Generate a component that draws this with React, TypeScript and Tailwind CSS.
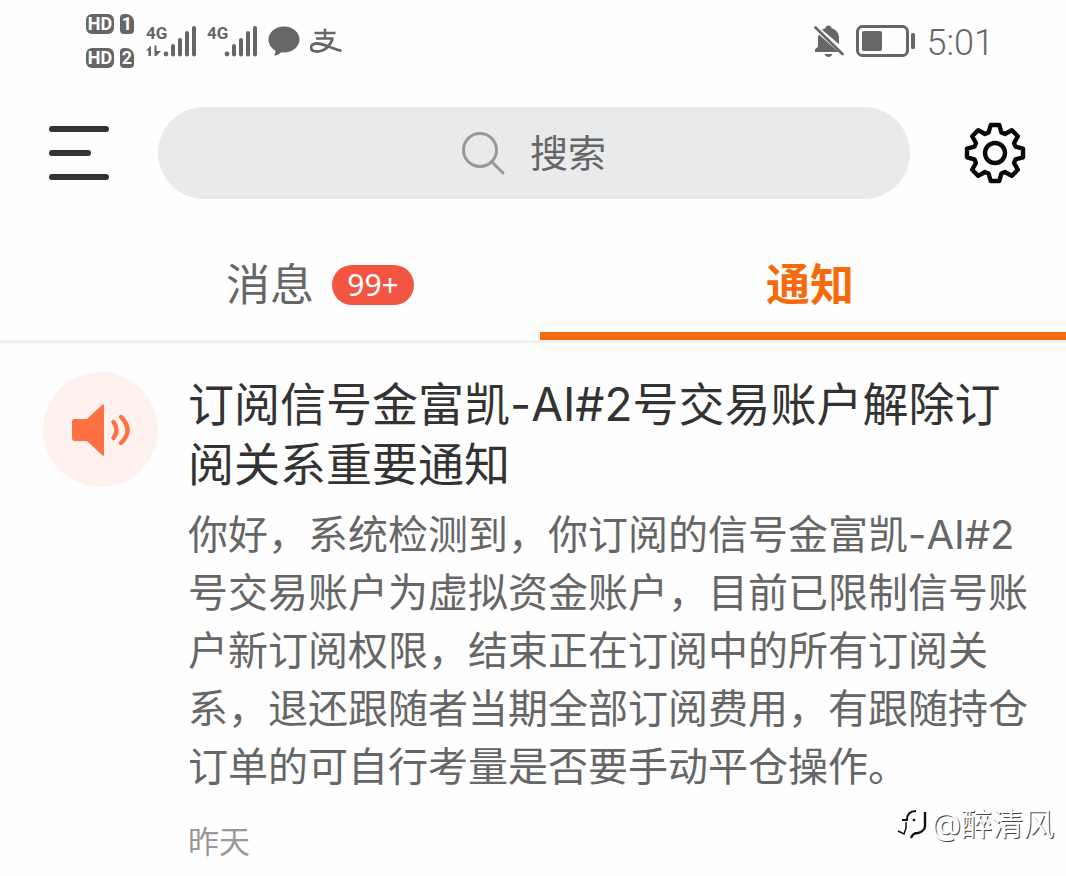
import type { ReactNode } from 'react'

function SimRow({ slot }: { slot: string }) {
  return (
    <div className="flex h-5 items-stretch gap-1.5 font-['Roboto'] text-lg leading-5 font-bold text-white">
      <span className="w-7 rounded-md bg-[#666] text-center">HD</span>
      <span className="w-3.5 rounded-sm rounded-tr-lg bg-[#666] text-center">{slot}</span>
    </div>
  )
}

function Signal({ arrows = false }: { arrows?: boolean }) {
  return (
    <svg width="51" height="46" viewBox="0 -6 51 46" fill="#666" aria-hidden="true">
      <text x="0" y="15" fontFamily="Roboto" fontWeight="700" fontSize="17">4G</text>
      {arrows && <path d="M0 26.500 5 21.500V32H2.500V26.500ZM8.500 21.500H10.500V27h4.500L10.500 32H8.500Z" />}
      <circle cx="20" cy="30" r="2.400" />
      <rect x="25" y="20" width="4" height="12.500" rx="2" />
      <rect x="32" y="14" width="4" height="18.500" rx="2" />
      <rect x="39" y="7" width="4" height="25.500" rx="2" />
      <rect x="46" y="2" width="4" height="30.500" rx="2" />
    </svg>
  )
}

function StatusBar() {
  return (
    <div className="flex h-[81px] items-center justify-between pr-[86px] pl-[86px]">
      <div className="flex items-center">
        <div className="flex flex-col gap-3.5">
          <SimRow slot="1" />
          <SimRow slot="2" />
        </div>
        <div className="ml-3 flex items-center gap-2.5">
          <Signal arrows />
          <Signal />
          <svg width="32" height="32" viewBox="0 0 32 32" fill="#666" aria-hidden="true">
            <path d="M16 1.500C24.600 1.500 31.500 7.200 31.500 14.500S24.600 27.500 16 27.500c-.9 0-1.800 0-2.600-.2-2 1.900-4.600 3.100-7.400 3.200 1.200-1.500 1.600-3.200 1.200-5C3 23 .5 19 .5 14.500.5 7.200 7.400 1.500 16 1.500Z" />
          </svg>
          <svg width="32" height="26" viewBox="0 0 32 26" fill="none" stroke="#666" aria-hidden="true">
            <path d="M4.500 5h21M15 .5v10M6 10.500h17.500" strokeWidth="2.400" />
            <path d="M22.500 11C20.500 17 15 23.500 7 23.500c-4 0-6-1.500-6-3.800 0-2.500 2.400-4.200 6-4.200 7 0 13 4.500 24.500 7.500" strokeWidth="2.800" />
          </svg>
        </div>
      </div>
      <div className="flex items-center gap-2.5">
        <svg width="32" height="34" viewBox="0 0 32 34" fill="#666" aria-hidden="true">
          <path d="M5 10.500 24.500 28H1v-2.500l3-3V14c0-1.200.3-2.400 1-3.500ZM8 5.800c1-.8 2.200-1.400 3.500-1.600C11.500 2.500 12.800 1.500 14.500 1.500s3 1 3 2.700c4.500 1 7.500 4.800 7.500 9.600v6.500ZM10.500 30h8c-.7 2-2.200 3-4 3s-3.300-1-4-3Z" />
          <path d="M1.500 3.500 28.500 30" stroke="#666" strokeWidth="2.600" strokeLinecap="round" />
        </svg>
        <svg width="61" height="32" viewBox="0 0 61 32" fill="#666" aria-hidden="true">
          <rect x="1.500" y="1.500" width="50" height="29" rx="5" fill="none" stroke="#666" strokeWidth="3" />
          <rect x="6" y="6" width="20" height="20" rx="2" />
          <rect x="55" y="8" width="4" height="16" rx="1.500" />
        </svg>
        <span className="pt-1 font-['Roboto'] text-[36px] leading-10 font-light text-[#666]">5:01</span>
      </div>
    </div>
  )
}

// one closed outline, eight teeth around the centre
function gearPath() {
  const corners = [[20.5, -6.4], [28, -4.3], [28, 4.3], [20.5, 6.4]]
  const points: string[] = []
  for (let i = 0; i < 8; i++) {
    const a = (i * Math.PI) / 4
    for (const [r, t] of corners) {
      const x = 31 + r * Math.cos(a) - t * Math.sin(a)
      const y = 31 + r * Math.sin(a) + t * Math.cos(a)
      points.push(`${x.toFixed(2)} ${y.toFixed(2)}`)
    }
  }
  return `M${points.join('L')}Z`
}

function Header() {
  return (
    <header className="flex items-center pt-[26px] pr-[54px] pl-[49px]">
      <button type="button" aria-label="菜单" className="flex h-[54px] w-15 flex-col justify-between">
        <span className="h-1.5 w-full rounded-full bg-[#333]" />
        <span className="h-1.5 w-[42px] rounded-full bg-[#333]" />
        <span className="h-1.5 w-full rounded-full bg-[#333]" />
      </button>
      <label className="mr-[54px] ml-[49px] flex h-[92px] flex-1 items-center justify-center gap-6 rounded-full bg-[#e9eaec]">
        <svg width="46" height="46" viewBox="0 0 46 46" fill="none" stroke="#999" strokeWidth="3" strokeLinecap="round" aria-hidden="true">
          <circle cx="20" cy="20" r="16.500" />
          <path d="m32 32 11 11" />
        </svg>
        <input
          type="text"
          aria-label="搜索"
          placeholder="搜索"
          className="w-[78px] bg-transparent text-[38px] leading-[56px] text-[#666] outline-none placeholder:text-[#666]"
        />
      </label>
      <button type="button" aria-label="设置">
        <svg width="62" height="62" viewBox="0 0 62 62" fill="none" stroke="#080808" strokeWidth="4.400" strokeLinejoin="round" aria-hidden="true">
          <path d={gearPath()} />
          <circle cx="31" cy="31" r="10" />
        </svg>
      </button>
    </header>
  )
}

function Tab({ active = false, children }: { active?: boolean; children: ReactNode }) {
  return (
    <button
      type="button"
      role="tab"
      aria-selected={active}
      className={
        active
          ? 'flex h-full items-center justify-center border-b-8 border-[#f56a0c] pt-2 text-[44px] leading-none font-bold text-[#f56a0c]'
          : 'flex h-full items-center justify-center text-[44px] leading-none text-[#666]'
      }
    >
      {children}
    </button>
  )
}

function Notice() {
  return (
    <article className="flex items-start gap-[30px] pt-[29px] pr-11 pl-[43px]">
      <div className="flex size-[115px] shrink-0 items-center justify-center rounded-full bg-[#fff2ee]">
        <svg width="62" height="56" viewBox="0 0 62 56" fill="#ff7043" aria-hidden="true">
          <path d="M5 17h12L32.500 2.500Q34 1.500 34 3.500V52.500Q34 54.500 32.500 53.500L17 39H5Q2 39 2 36V20Q2 17 5 17Z" />
          <path d="M43.500 20q6 8 0 16M51 15q13 13 0 26" fill="none" stroke="#ff7043" strokeWidth="4.400" strokeLinecap="round" />
        </svg>
      </div>
      <div className="min-w-0 flex-1 pt-0.5">
        <h2 className="text-[46px] leading-[60px] text-[#333]">
          订阅信号金富凯-AI#2号交易账户解除订阅关系重要通知
        </h2>
        <p className="mt-3 text-[40px] leading-[58px] text-[#666]">
          你好，系统检测到，你订阅的信号金富凯-AI#2号交易账户为虚拟资金账户，目前已限制信号账户新订阅权限，结束正在订阅中的所有订阅关系，退还跟随者当期全部订阅费用，有跟随持仓订单的可自行考量是否要手动平仓操作。
        </p>
        <time className="mt-6 block text-[31px] leading-[44px] text-[#999]">昨天</time>
      </div>
    </article>
  )
}

function Watermark() {
  return (
    <div className="absolute right-3 bottom-8 flex items-center gap-0.5">
      <svg width="32" height="34" viewBox="0 0 32 34" fill="none" stroke="#111" aria-hidden="true">
        <path d="M5 13h5c0-6 3-9 9-9" strokeWidth="2" />
        <path d="M9 15v6l-2 6-6-3" strokeWidth="1.500" />
        <path d="M28 5v14c0 3-3 6-7 7-4 0-6 2-7 5" strokeWidth="2.400" />
        <circle cx="17" cy="13" r="1" fill="#111" />
      </svg>
      <span className="text-[31px] leading-10 text-white [text-shadow:1px_1px_0_#444]">@醉清风</span>
    </div>
  )
}

export default function App() {
  return (
    <div className="relative min-h-screen overflow-hidden bg-[#fefefe] font-['Inter','Noto_Sans_CJK_SC',sans-serif]">
      <div className="-mr-3.5">
        <StatusBar />
        <Header />
        <div role="tablist" className="mt-[31px] grid h-[113px] grid-cols-2 border-b-3 border-[#f0f0f0]">
          <Tab>
            <span className="relative">
              消息
              <span className="absolute inset-y-0 left-full ml-[18px] flex w-[82px] items-center">
                <span className="flex h-10 w-full items-center justify-center rounded-full bg-[#f25643] font-['Noto_Sans'] text-[30px] text-white">
                  99+
                </span>
              </span>
            </span>
          </Tab>
          <Tab active>通知</Tab>
        </div>
        <Notice />
      </div>
      <Watermark />
    </div>
  )
}
